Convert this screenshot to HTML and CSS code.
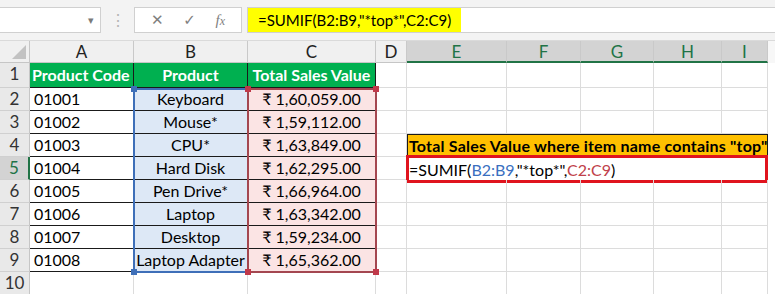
FILE: index.html
```html
<!DOCTYPE html>
<html lang="en">
<head>
  <meta charset="UTF-8" />
  <title>SUMIF wildcard</title>
  <link rel="stylesheet" href="styles.css">
</head>
<body>

<div class="toolbar">
  <div class="namebox"><span class="arrow">▾</span></div>
  <div class="dots">⋮</div>
  <div class="fbtns">
    <span class="btn">✕</span>
    <span class="btn check">✓</span>
    <span class="btn fx"><i>f</i><i>x</i></span>
  </div>
  <div class="finput"><span class="hl">=SUMIF(B2:B9,"*top*",C2:C9)</span></div>
</div>

<div class="sheet">
  <div class="corner"><span class="tri"></span></div>
  <div class="ch">A</div>
  <div class="ch">B</div>
  <div class="ch">C</div>
  <div class="ch">D</div>
  <div class="ch sel">E</div>
  <div class="ch sel">F</div>
  <div class="ch sel">G</div>
  <div class="ch sel">H</div>
  <div class="ch sel">I</div>
  <div class="ch blank"></div>

  <!-- row 1 -->
  <div class="rh">1</div>
  <div class="c head">Product Code</div>
  <div class="c head mid">Product</div>
  <div class="c head mid">Total Sales Value</div>
  <div class="c"></div><div class="c"></div><div class="c"></div><div class="c"></div><div class="c"></div><div class="c"></div><div class="c none"></div>

  <!-- row 2 -->
  <div class="rh">2</div>
  <div class="c code">01001</div>
  <div class="c prod">Keyboard</div>
  <div class="c amt">₹ 1,60,059.00</div>
  <div class="c"></div><div class="c"></div><div class="c"></div><div class="c"></div><div class="c"></div><div class="c"></div><div class="c none"></div>

  <!-- row 3 -->
  <div class="rh">3</div>
  <div class="c code">01002</div>
  <div class="c prod">Mouse*</div>
  <div class="c amt">₹ 1,59,112.00</div>
  <div class="c"></div><div class="c"></div><div class="c"></div><div class="c"></div><div class="c"></div><div class="c"></div><div class="c none"></div>

  <!-- row 4 -->
  <div class="rh">4</div>
  <div class="c code">01003</div>
  <div class="c prod">CPU*</div>
  <div class="c amt">₹ 1,63,849.00</div>
  <div class="c"></div>
  <div class="c label">Total Sales Value where item name contains "top"</div>
  <div class="c none"></div>

  <!-- row 5 -->
  <div class="rh on">5</div>
  <div class="c code">01004</div>
  <div class="c prod">Hard Disk</div>
  <div class="c amt">₹ 1,62,295.00</div>
  <div class="c"></div>
  <div class="c formula">=SUMIF(<span class="ref-b">B2:B9</span>,"*top*",<span class="ref-c">C2:C9</span>)</div>
  <div class="c none"></div>

  <!-- row 6 -->
  <div class="rh">6</div>
  <div class="c code">01005</div>
  <div class="c prod">Pen Drive*</div>
  <div class="c amt">₹ 1,66,964.00</div>
  <div class="c"></div><div class="c"></div><div class="c"></div><div class="c"></div><div class="c"></div><div class="c"></div><div class="c none"></div>

  <!-- row 7 -->
  <div class="rh">7</div>
  <div class="c code">01006</div>
  <div class="c prod">Laptop</div>
  <div class="c amt">₹ 1,63,342.00</div>
  <div class="c"></div><div class="c"></div><div class="c"></div><div class="c"></div><div class="c"></div><div class="c"></div><div class="c none"></div>

  <!-- row 8 -->
  <div class="rh">8</div>
  <div class="c code">01007</div>
  <div class="c prod">Desktop</div>
  <div class="c amt">₹ 1,59,234.00</div>
  <div class="c"></div><div class="c"></div><div class="c"></div><div class="c"></div><div class="c"></div><div class="c"></div><div class="c none"></div>

  <!-- row 9 -->
  <div class="rh">9</div>
  <div class="c code">01008</div>
  <div class="c prod">Laptop Adapter</div>
  <div class="c amt">₹ 1,65,362.00</div>
  <div class="c"></div><div class="c"></div><div class="c"></div><div class="c"></div><div class="c"></div><div class="c"></div><div class="c none"></div>

  <!-- row 10 -->
  <div class="rh">10</div>
  <div class="c"></div><div class="c"></div><div class="c"></div><div class="c"></div><div class="c"></div><div class="c"></div><div class="c"></div><div class="c"></div><div class="c"></div><div class="c none"></div>

  <!-- range highlights drawn over the grid -->
  <div class="range range-b"><i class="h tl"></i><i class="h tr"></i><i class="h bl"></i><i class="h br"></i></div>
  <div class="range range-c"><i class="h tl"></i><i class="h tr"></i><i class="h bl"></i><i class="h br"></i></div>
</div>

</body>
</html>
```

FILE: styles.css
```css
body {
  margin: 0;
  width: 775px;
  height: 294px;
  overflow: hidden;
  background: #fff;
  font-family: Lato, "Open Sans", sans-serif;
  color: #000;
}
.toolbar {
  display: flex;
  align-items: center;
  height: 41px;
  background: #f3f3f3;
  border-bottom: 1px solid #dadada;
  box-sizing: border-box;
}
.namebox {
  width: 101px;
  height: 26px;
  background: #fff;
  border: 1px solid #d0d0d0;
  border-left: none;
  box-sizing: border-box;
  display: flex;
  justify-content: flex-end;
  align-items: center;
}
.arrow {
  color: #7a7a7a;
  font-size: 11px;
  margin-right: 6px;
}
.dots {
  width: 33px;
  text-align: center;
  color: #b5b5b5;
  font-size: 16px;
}
.fbtns {
  width: 108px;
  height: 26px;
  background: #fff;
  border: 1px solid #d0d0d0;
  box-sizing: border-box;
  display: flex;
  align-items: center;
  justify-content: space-around;
  padding: 0 6px;
}
.btn {
  color: #7f7f7f;
  font-size: 15px;
  font-family: "DejaVu Sans", sans-serif;
}
.check {
  font-weight: bold;
}
.fx {
  font-family: "Liberation Serif", serif;
  font-size: 15px;
}
.fx i:last-child {
  font-size: 12px;
}
.finput {
  margin-left: 5px;
  flex: 1;
  height: 26px;
  background: #fff;
  border: 1px solid #d0d0d0;
  border-right: none;
  box-sizing: border-box;
  display: flex;
}
.hl {
  background: #ffff00;
  padding: 0 10px 0 10px;
  font-size: 15px;
  line-height: 25px;
}
.sheet {
  position: relative;
  display: grid;
  grid-template-columns: 30px 104px 114px 128px 31px 100px 74px 73px 68px 46px 7px;
  grid-template-rows: 22px 25px repeat(9, 23px);
  font-size: 16px;
}
.corner {
  background: #f0f0f0;
  border-right: 1px solid #c6c6c6;
  border-bottom: 1px solid #c6c6c6;
  position: relative;
}
.tri {
  position: absolute;
  right: 3px;
  bottom: 3px;
  border-left: 14px solid transparent;
  border-bottom: 14px solid #c2c2c2;
}
.ch {
  background: #f0f0f0;
  border-right: 1px solid #c9c9c9;
  border-bottom: 1px solid #c6c6c6;
  text-align: center;
  line-height: 21px;
  color: #222;
  font-size: 17px;
}
.ch.sel {
  background: #d3d3d3;
  border-bottom: 2px solid #217346;
  color: #217346;
}
.ch.blank {
  background: #f7f7f7;
  border: none;
}
.rh {
  background: #e9e9e9;
  border-right: 1px solid #c6c6c6;
  border-bottom: 1px solid #d0d0d0;
  text-align: center;
  line-height: 22px;
  color: #333;
  font-size: 17px;
}
.rh.on {
  background: #d3d3d3;
  border-right: 2px solid #217346;
  color: #217346;
}
.c {
  border-right: 1px solid #dcdcdc;
  border-bottom: 1px solid #dcdcdc;
  line-height: 22px;
  padding: 0 4px;
  white-space: nowrap;
  overflow: visible;
}
.c.none {
  border: none;
}
.head {
  background: #00b050;
  color: #fff;
  font-weight: bold;
  line-height: 24px;
  border-right: 1px solid #1a1a1a;
  border-bottom: 1px solid #1a1a1a;
  padding: 0 2px;
}
.mid {
  text-align: center;
}
.code {
  border-right: 1px solid #1a1a1a;
  border-bottom: 1px solid #1a1a1a;
}
.prod {
  text-align: center;
  background: #dde8f6;
  border-right: 1px solid #1a1a1a;
  border-bottom: 1px solid #1a1a1a;
  padding: 0;
}
.amt {
  text-align: center;
  background: #fbe4e4;
  border-right: 1px solid #1a1a1a;
  border-bottom: 1px solid #1a1a1a;
}
.label {
  grid-column: 6 / span 5;
  background: #ffc000;
  font-weight: bold;
  letter-spacing: 0.2px;
  border: 1px solid #1a1a1a;
  padding: 0 1px;
}
.formula {
  grid-column: 6 / span 5;
  border: 3px solid #e0141e;
  margin: -2px 0 -3px -1px;
  line-height: 23px;
  padding: 0;
}
.ref-b {
  color: #3a6fbf;
}
.ref-c {
  color: #c0404a;
}
.range {
  position: absolute;
  box-sizing: border-box;
  border: 2px solid;
}
.range-b {
  left: 133px;
  top: 47px;
  width: 116px;
  height: 185px;
  border-color: #3e6fb8;
}
.range-c {
  left: 247px;
  top: 47px;
  width: 130px;
  height: 185px;
  border-color: #a44750;
}
.h {
  position: absolute;
  width: 6px;
  height: 6px;
}
.range-b .h {
  background: #3e6fb8;
}
.range-c .h {
  background: #c0394a;
}
.tl { left: -4px; top: -4px; }
.tr { right: -4px; top: -4px; }
.bl { left: -4px; bottom: -4px; }
.br { right: -4px; bottom: -4px; }
```
